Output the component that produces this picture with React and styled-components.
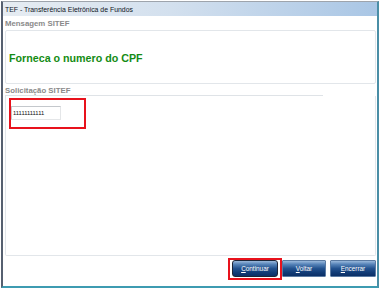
import React from "react";
import styled, { createGlobalStyle } from "styled-components";

const GlobalStyle = createGlobalStyle`
  body {
    margin: 0;
    background: #ffffff;
    font-family: "Liberation Sans", Arial, sans-serif;
  }
`;

const Window = styled.div`
  margin: 1px 0 0 1px;
  width: 378px;
  height: 287px;
  box-sizing: border-box;
  border-top: 1px solid #9ea4ac;
  border-left: 2px solid #566070;
  border-right: 2px solid #4a8ea6;
  border-bottom: 2px solid #3d9bb1;
  display: flex;
  flex-direction: column;
  background: #ffffff;
`;

const TitleBar = styled.div`
  height: 13px;
  display: flex;
  align-items: center;
  padding: 1px 0 0 2px;
  background: linear-gradient(90deg, #e6ecf2 0%, #d3e0ee 45%, #a9c6e5 100%);
  color: #10161e;
  font-size: 6.9px;
  white-space: nowrap;
`;

const Body = styled.div`
  flex: 1;
  display: flex;
  flex-direction: column;
  padding: 0 1px 0 2px;
`;

const Caption = styled.div`
  height: ${(p) => p.h}px;
  box-sizing: border-box;
  display: flex;
  align-items: center;
  padding-top: 1px;
  color: #8a8a8a;
  font-size: 7.8px;
  font-weight: bold;
  white-space: nowrap;
  width: ${(p) => (p.line ? "318px" : "auto")};
  border-bottom: ${(p) => (p.line ? "1px solid #dfe3e7" : "none")};
`;

const MessagePanel = styled.div`
  height: 54px;
  box-sizing: border-box;
  border: 1px solid #e2e6ea;
  border-radius: 2px;
  display: flex;
  align-items: center;
  padding: 2px 0 0 3px;
`;

const Message = styled.span`
  color: #148c14;
  font-size: 10.7px;
  font-weight: bold;
  white-space: nowrap;
`;

const RequestPanel = styled.div`
  flex: 1;
  box-sizing: border-box;
  border: 1px solid #e2e6ea;
  border-top: none;
  border-radius: 0 0 2px 2px;
  padding: 2px 0 0 3px;
`;

const Highlight = styled.div`
  width: 77px;
  height: 31px;
  box-sizing: border-box;
  border: 2px solid #e8121c;
  padding: 6px 0 0 0;
`;

const Field = styled.div`
  width: 50px;
  height: 14px;
  box-sizing: border-box;
  border: 1px solid #c4c8cc;
  border-right-color: #e4e6e8;
  border-bottom-color: #e4e6e8;
  display: flex;
  align-items: center;
  padding-left: 1px;
  font-size: 5.8px;
  color: #101010;
  background: #fff;
`;

const Footer = styled.div`
  height: 26px;
  display: flex;
  justify-content: flex-end;
  align-items: flex-start;
  gap: 4px;
  padding: 4px 0 0 0;
`;

const ButtonWrap = styled.div`
  position: relative;
  &::after {
    content: "";
    display: ${(p) => (p.marked ? "block" : "none")};
    position: absolute;
    left: -4px;
    right: -4px;
    top: -2px;
    bottom: -3px;
    border: 2px solid #e8121c;
    pointer-events: none;
  }
`;

const Button = styled.div`
  width: ${(p) => p.w}px;
  height: 17px;
  box-sizing: border-box;
  border: 1px solid ${(p) => (p.focused ? "#1c2538" : "#5a7aa2")};
  border-radius: ${(p) => (p.focused ? "3px" : "1px")};
  background: linear-gradient(
    180deg,
    #9ab9dc 0%,
    #5683b8 22%,
    #23528f 50%,
    #123d78 75%,
    #0b2f66 100%
  );
  color: #ffffff;
  font-size: 6.4px;
  display: flex;
  align-items: center;
  justify-content: center;
  white-space: nowrap;
  u {
    text-decoration: underline;
  }
`;

export default function App() {
  return (
    <>
      <GlobalStyle />
      <Window>
        <TitleBar>TEF - Transferência Eletrônica de Fundos</TitleBar>
        <Body>
          <Caption h={14}>Mensagem SITEF</Caption>
          <MessagePanel>
            <Message>Forneca o numero do CPF</Message>
          </MessagePanel>
          <Caption h={12} line>
            Solicitação SITEF
          </Caption>
          <RequestPanel>
            <Highlight>
              <Field>11111111111</Field>
            </Highlight>
          </RequestPanel>
          <Footer>
            <ButtonWrap marked>
              <Button w={46} focused>
                <span>
                  <u>C</u>ontinuar
                </span>
              </Button>
            </ButtonWrap>
            <ButtonWrap>
              <Button w={44}>
                <span>
                  <u>V</u>oltar
                </span>
              </Button>
            </ButtonWrap>
            <ButtonWrap>
              <Button w={46}>
                <span>
                  <u>E</u>ncerrar
                </span>
              </Button>
            </ButtonWrap>
          </Footer>
        </Body>
      </Window>
    </>
  );
}
